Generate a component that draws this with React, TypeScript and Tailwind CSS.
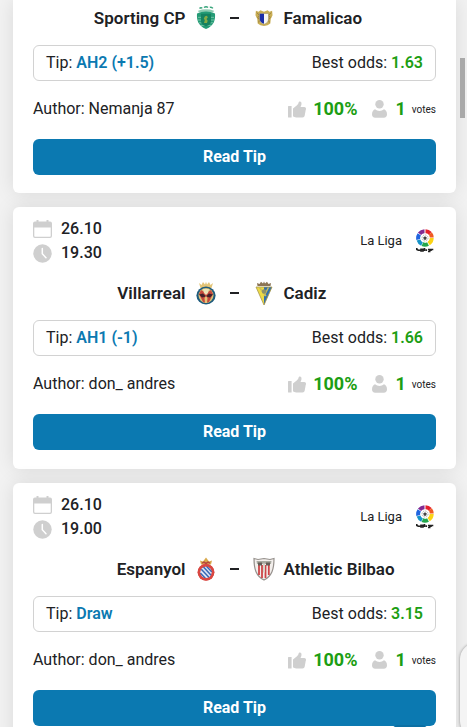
import type { ReactNode } from "react";

type Tip = {
  date: string;
  time: string;
  home: string;
  away: string;
  homeCrest: ReactNode;
  awayCrest: ReactNode;
  tip: string;
  odds: string;
  author: string;
};

const SportingCrest = () => (
  <svg viewBox="0 0 20 26" preserveAspectRatio="none" className="h-6 w-5" aria-hidden="true">
    <path d="M3.500 2.600c1-1 2.200-.8 2.600-.1M8 1.600c1.300-.9 3-.8 4 0M13.800 1.600c1.200-.5 2.400 0 3 1" stroke="#3aa57c" strokeWidth="1.500" fill="none" />
    <path d="M2 5.200Q10 2 18 5.200L17.200 7H2.800z" fill="#8fcdb3" />
    <path d="M1 8Q10 4 19 8c.4 7-.8 13-9 17C1.800 21 .6 15 1 8z" fill="#249b76" />
    <path d="M2 12.300h16M2 15.200h16M3 18.200h14M5 21h10" stroke="#75c4a5" strokeWidth="1" />
    <path d="M5 8.500h10v8c0 3-2 4.500-5 5.500-3-1-5-2.500-5-5.500z" fill="#158260" />
    <path d="M8 18.500l.8-3-1-2 1.200-2.500 2-.5.8 2-1.300 1.500 1.200 2-.7 2.500z" fill="#86ab45" />
  </svg>
);

const FamalicaoCrest = () => (
  <svg viewBox="0 0 20 22" className="h-5 w-[18px]" aria-hidden="true">
    <path d="M1 3l3 1 2-1.500L10 4l4-1.500L16 4l3-1 .5 5-2 4-.5 5-3 2-4 .8L6 19l-3-2-.5-5-2-4z" fill="#c9ae55" />
    <path d="M2 5l3 3-2 2 2 3-1 3M18 5l-3 3 2 2-2 3 1 3" stroke="#8e7638" strokeWidth=".9" fill="none" />
    <path d="M5 6h10v6c0 3.500-2 5-5 6-3-1-5-2.500-5-6z" fill="#f7f7f5" stroke="#9a8a58" strokeWidth=".6" />
    <path d="M5.300 6.400H10v11c-3-1-4.700-2.500-4.700-5.500z" fill="#1c2ea8" />
  </svg>
);

const VillarrealCrest = () => (
  <svg viewBox="0 0 20 24" className="h-6 w-5" aria-hidden="true">
    <path d="M3 2l2.500 2L7 1l2 2.500L10 .8l1 2.700L13 1l1.500 3L17 2l-1.500 5h-11z" fill="#e3c477" />
    <ellipse cx="10" cy="14.500" rx="9.600" ry="9" fill="#1e5b7d" />
    <ellipse cx="10" cy="14.500" rx="7.500" ry="7.600" fill="#d9c277" />
    <path d="M5 9l5 3 5-3 2 4-4 8-3 1-3-1-4-8z" fill="#c6483c" />
    <path d="M7 8h6l-1 4-2 2-2-2z" fill="#ece2b8" />
    <path d="M3 13.500l4-1 3 3 3-3 4 1-3 3-4-1-4 1z" fill="#41202b" />
    <path d="M8.500 17l1.500-2 1.500 2-.5 5H9z" fill="#e3c477" />
  </svg>
);

const CadizCrest = () => (
  <svg viewBox="0 0 20 24" className="h-6 w-5" aria-hidden="true">
    <path d="M3.500 5L3 2l2.500 1L7 .8 9 2.500 10 .5l1 2L13 .8 14.500 3 17 2l-.5 3z" fill="#8b7454" />
    <path d="M2 6h16L10 24z" fill="#eddb45" />
    <path d="M10 6h8L10 24z" fill="#316fac" />
    <path d="M2 6h16L10 24z" fill="none" stroke="#a8974c" strokeWidth=".8" />
    <path d="M5.500 6.500L12 15M14.500 6.500L10 15" stroke="#c9bd58" strokeWidth="1.500" />
    <circle cx="10" cy="10.500" r="2.200" fill="#8c9169" />
  </svg>
);

const EspanyolCrest = () => (
  <svg viewBox="0 0 20 24" className="h-6 w-5" aria-hidden="true">
    <path d="M5 7.500L4 3.500l3 1L10 .5l3 4 3-1-1 4z" fill="#d9a94c" />
    <path d="M6 6.200l2-1 2 1.300 2-1.300 2 1" stroke="#b8443b" strokeWidth="1.500" fill="none" />
    <circle cx="10" cy="15.300" r="8.300" fill="#d94742" />
    <circle cx="10" cy="15.300" r="5.800" fill="#dfe5f5" />
    <path d="M5.300 12.200l7.800 8.200M7.500 9.900l7.600 8.300M10.500 9.300l5.400 5.600M4.300 16l5 5.200" stroke="#3668b5" strokeWidth="1.500" />
    <circle cx="10" cy="15.300" r="7.200" fill="none" stroke="#d94742" strokeWidth="2.400" />
  </svg>
);

const AthleticCrest = () => (
  <svg viewBox="0 0 22 24" className="h-6 w-[22px]" aria-hidden="true">
    <path d="M1 1.500l4 1 6-1 6 1 4-1C21 12 19 19 11 23 3 19 1 12 1 1.500z" fill="#f3efec" stroke="#96918d" strokeWidth="1.200" />
    <path d="M3.500 4h15L18 7H4z" fill="#a8aaa1" />
    <path d="M6 6v12M9 8v13M12.500 8v13M15.800 7v11" stroke="#cd4548" strokeWidth="1.800" />
    <path d="M5 5.500h4v3H5zM13 5.500h4v3h-4z" fill="#655c56" />
    <path d="M10 6.500h2v9h-2z" fill="#d7d2c8" />
  </svg>
);

const LaLigaLogo = () => (
  <svg viewBox="0 0 18 24" className="h-6 w-[18px]" aria-hidden="true">
    <g fill="none" strokeWidth="4">
      <path d="M9.500 2.300a6.700 6.700 0 0 1 4.700 2" stroke="#e5202b" />
      <path d="M14.300 4.400a6.700 6.700 0 0 1 1.400 4.100" stroke="#f05a23" />
      <path d="M15.700 9a6.700 6.700 0 0 1-3 5.600" stroke="#fbd315" />
      <path d="M12 15a6.700 6.700 0 0 1-5.600.2" stroke="#22a64b" />
      <path d="M6 15a6.700 6.700 0 0 1-3.500-4" stroke="#1593c8" />
      <path d="M2.300 10.500a6.700 6.700 0 0 1 1-5.200" stroke="#1f64df" />
      <path d="M3.500 4.800A6.700 6.700 0 0 1 8.500 2.300" stroke="#812a92" />
    </g>
    <circle cx="9" cy="9" r="4.300" fill="#fff" />
    <circle cx="9" cy="9" r="3" fill="none" stroke="#999" strokeWidth=".7" strokeDasharray="1.500 .8" />
    <path d="M9 7.300l1.800 1.300-.7 2.100H7.900l-.7-2.100z" fill="#444" />
    <path d="M.8 19v1.500l1.600.8h2M5 20.300h2v1.700H5zM8.500 19v3M10.300 20.200V22M12 20.500h1.700V22.500H12M15 22v-1.500h2.300" fill="none" stroke="#222" strokeWidth="1.600" />
  </svg>
);

const CalendarIcon = () => (
  <svg viewBox="0 0 19 18" className="h-[18px] w-[19px]" fill="#cfcfcf" aria-hidden="true">
    <path d="M2 1.600h1.500V0h2v1.600h8V0h2v1.600H17a2 2 0 0 1 2 2V16a2 2 0 0 1-2 2H2a2 2 0 0 1-2-2V3.600a2 2 0 0 1 2-2zM1.300 7.500v8.200c0 .6.400 1 1 1h14.400c.6 0 1-.4 1-1V7.500z" fillRule="evenodd" />
  </svg>
);

const ClockIcon = () => (
  <svg viewBox="0 0 19 19" className="size-[19px]" aria-hidden="true">
    <circle cx="9.500" cy="9.500" r="9.200" fill="#cfcfcf" />
    <path d="M9.300 4.500v5.300l3.700 4" fill="none" stroke="#fff" strokeWidth="1.500" strokeLinecap="round" />
  </svg>
);

const ThumbIcon = () => (
  <svg viewBox="0 0 18 17" className="h-[17px] w-[18px]" fill="#cfcfcf" aria-hidden="true">
    <path d="M.6 5h3v11.500h-3A.6.6 0 0 1 0 15.900V5.600A.6.6 0 0 1 .6 5z" />
    <path d="M5 7.500l4-3.300C10 3.300 10.400 2.500 10.600 1.500c.2-.8.700-1 1.300-1 1.100 0 1.600.8 1.600 1.900 0 1.500-.5 2.600-1 3.600h3.800c1 0 1.700.8 1.700 1.700 0 .5-.1.800-.3 1.200l-1 5.700c-.2 1.200-1 1.900-2.200 1.900H8.200c-1.300 0-2.200-.5-3.200-1.200z" />
  </svg>
);

const PersonIcon = () => (
  <svg viewBox="0 0 15 18" className="h-[18px] w-[15px]" fill="#cfcfcf" aria-hidden="true">
    <circle cx="7.500" cy="4.200" r="4.200" />
    <path d="M3 9.300a6.600 6.600 0 0 0 9 0c2 .8 3 2.500 3 5.200 0 2-1.200 3.200-3.200 3.200H3.200C1.200 17.700 0 16.500 0 14.500c0-2.700 1-4.400 3-5.200z" />
  </svg>
);

function TipCard({ data, continued = false }: { data: Tip; continued?: boolean }) {
  return (
    <article
      className={
        continued
          ? "rounded-b-md bg-white px-5 pt-[6px] pb-[18px] shadow-[0_0_20px_rgba(0,0,0,0.1)]"
          : "rounded-md bg-white px-5 pt-[10px] pb-[19px] shadow-[0_0_20px_rgba(0,0,0,0.1)]"
      }
    >
      {!continued && (
        <header className="mb-4 flex items-center justify-between">
          <div className="text-base leading-6 font-medium">
            <div className="flex items-center gap-[9px]">
              <CalendarIcon />
              <time>{data.date}</time>
            </div>
            <div className="flex items-center gap-[9px]">
              <ClockIcon />
              <time>{data.time}</time>
            </div>
          </div>
          <div className="flex items-center gap-[14px] pr-[2px] text-[13px]">
            <span>La Liga</span>
            <LaLigaLogo />
          </div>
        </header>
      )}
      <h2 className="grid h-6 grid-cols-[1fr_98px_1fr] items-center text-[17px] leading-6 font-semibold">
        <span className="text-right">{data.home}</span>
        <span className="flex items-center justify-between px-[9px]">
          <span className="flex w-[22px] justify-center">{data.homeCrest}</span>
          <span className="h-[2px] w-[9px] bg-[#202124]" />
          <span className="flex w-[22px] justify-center">{data.awayCrest}</span>
        </span>
        <span>{data.away}</span>
      </h2>
      <div className="mt-[15px] flex h-9 items-center justify-between rounded-md border border-[#d2d2d2] px-3 text-base">
        <span>
          Tip: <b className="font-semibold text-[#0b79b1]">{data.tip}</b>
        </span>
        <span>
          Best odds: <b className="font-semibold text-[#1c9e13]">{data.odds}</b>
        </span>
      </div>
      <div className="mt-4 flex h-6 items-center justify-between text-base">
        <span>Author: {data.author}</span>
        <div className="flex items-center">
          <ThumbIcon />
          <b className="ml-[7px] text-lg font-bold text-[#1c9e13]">100%</b>
          <span className="ml-[15px] flex"><PersonIcon /></span>
          <b className="ml-2 text-lg font-bold text-[#1c9e13]">1</b>
          <span className="ml-[6px] text-[10px]">votes</span>
        </div>
      </div>
      <button type="button" className="mt-[18px] block h-9 w-full rounded-md bg-[#0b79b1] text-base font-bold text-white">
        Read Tip
      </button>
    </article>
  );
}

const tips: Tip[] = [
  { date: "26.10", time: "21.30", home: "Sporting CP", away: "Famalicao", homeCrest: <SportingCrest />, awayCrest: <FamalicaoCrest />, tip: "AH2 (+1.5)", odds: "1.63", author: "Nemanja 87" },
  { date: "26.10", time: "19.30", home: "Villarreal", away: "Cadiz", homeCrest: <VillarrealCrest />, awayCrest: <CadizCrest />, tip: "AH1 (-1)", odds: "1.66", author: "don_ andres" },
  { date: "26.10", time: "19.00", home: "Espanyol", away: "Athletic Bilbao", homeCrest: <EspanyolCrest />, awayCrest: <AthleticCrest />, tip: "Draw", odds: "3.15", author: "don_ andres" },
];

export default function App() {
  return (
    <div className="relative h-screen overflow-hidden bg-[#f2f2f2] font-['Roboto',sans-serif] text-[#202124]">
      <main className="flex flex-col gap-[14px] pr-[11px] pl-[13px]">
        {tips.map((t, i) => (
          <TipCard key={t.home} data={t} continued={i === 0} />
        ))}
      </main>
      <div className="absolute top-[58px] right-[2px] h-[60px] w-[5px] bg-[#a9a9a9]" />
      <div className="absolute right-[-20px] bottom-[-10px] h-[94px] w-[27px] rounded-l-2xl bg-[#f4f4f4] shadow-[0_0_3px_rgba(0,0,0,0.4)]" />
      <div className="absolute right-[39px] bottom-[-34px] h-9 w-9 rounded-md bg-[#0b6fa3]" />
    </div>
  );
}
